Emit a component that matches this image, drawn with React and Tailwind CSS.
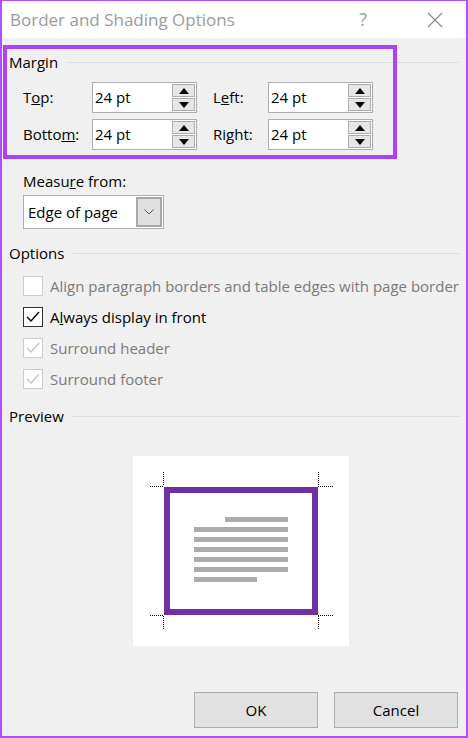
import React from "react";

const font = { fontFamily: '"Open Sans", "Noto Sans", sans-serif' };

const Spinner = () => (
  <div className="flex flex-col w-[23px] my-[1px] mr-[1px] gap-[1px]">
    <div className="flex-1 bg-[#e6e6e6] border border-[#adadad] flex items-center justify-center">
      <svg width="10" height="6" viewBox="0 0 10 6">
        <path d="M0 6 L5 0 L10 6 Z" fill="#000" />
      </svg>
    </div>
    <div className="flex-1 bg-[#e6e6e6] border border-[#adadad] flex items-center justify-center">
      <svg width="10" height="6" viewBox="0 0 10 6">
        <path d="M0 0 L10 0 L5 6 Z" fill="#000" />
      </svg>
    </div>
  </div>
);

const NumInput = () => (
  <div className="w-[105px] h-[31px] bg-white border border-[#adadad] flex items-stretch">
    <div className="flex-1 flex items-center pl-[2px] text-[15px] text-black">24 pt</div>
    <Spinner />
  </div>
);

const Heading = ({ children }) => (
  <div className="flex items-center h-[20px]">
    <span className="text-[15px] text-black leading-[20px]">{children}</span>
    <div className="flex-1 h-px bg-[#dcdcdc] ml-[9px]" />
  </div>
);

const Check = ({ checked, disabled, children }) => (
  <div className="flex items-center h-[20px] pl-[14px] gap-[7px]">
    <div
      className={
        "w-[20px] h-[20px] border bg-white flex items-center justify-center " +
        (disabled ? "border-[#cccccc]" : "border-[#333333]")
      }
    >
      {checked && (
        <svg width="14" height="12" viewBox="0 0 14 12">
          <path
            d="M1 6 L5 10 L13 1"
            fill="none"
            stroke={disabled ? "#c4c4c4" : "#000"}
            strokeWidth="1.4"
          />
        </svg>
      )}
    </div>
    <span className={"text-[15px] leading-[20px] " + (disabled ? "text-[#7a7a7a]" : "text-black")}>
      {children}
    </span>
  </div>
);

const Preview = () => (
  <svg width="216" height="190" viewBox="0 0 216 190">
    <rect x="0" y="0" width="216" height="190" fill="#fff" />
    <g stroke="#000" strokeWidth="1" strokeDasharray="1 1">
      <path d="M17 30.5 H31 M30.5 16 V30" />
      <path d="M185 30.5 H200 M185.5 16 V30" />
      <path d="M17 159.5 H31 M30.5 160 V174" />
      <path d="M185 159.5 H200 M185.5 160 V174" />
    </g>
    <rect x="34" y="34" width="148" height="122" fill="none" stroke="#7030a0" strokeWidth="6" />
    <g fill="#acacac">
      <rect x="92" y="61" width="63" height="5" />
      <rect x="61" y="71" width="94" height="5" />
      <rect x="61" y="81" width="94" height="5" />
      <rect x="61" y="91" width="94" height="5" />
      <rect x="61" y="101" width="94" height="5" />
      <rect x="61" y="111" width="94" height="5" />
      <rect x="61" y="121" width="63" height="5" />
    </g>
  </svg>
);

export default function App() {
  return (
    <div
      className="w-[468px] h-[738px] border-x-2 border-b-2 border-t border-[#b44cff] flex flex-col relative"
      style={font}
    >
      {/* title bar */}
      <div className="h-[37px] bg-white flex items-center pl-[8px] shrink-0">
        <span className="text-[17px] text-[#9a9a9a] flex-1">Border and Shading Options</span>
        <span className="text-[18px] text-[#9a9a9a] mr-[60px]">?</span>
        <svg width="16" height="16" viewBox="0 0 16 16" className="mr-[23px]">
          <path d="M1 1 L15 15 M15 1 L1 15" stroke="#888" strokeWidth="1.2" />
        </svg>
      </div>

      {/* body */}
      <div className="flex-1 bg-[#f0f0f0] flex flex-col pl-[7px] pr-[7px] pb-[8px]">
        <div className="mt-[14px]">
          <Heading>Margin</Heading>
        </div>

        <div className="mt-[10px] flex flex-col gap-[6px] pl-[14px]">
          <div className="flex items-center">
            <span className="w-[69px] text-[15px] text-black">
              T<u>o</u>p:
            </span>
            <NumInput />
            <span className="w-[71px] pl-[16px] text-[15px] text-black">
              L<u>e</u>ft:
            </span>
            <NumInput />
          </div>
          <div className="flex items-center">
            <span className="w-[69px] text-[15px] text-black">
              Botto<u>m</u>:
            </span>
            <NumInput />
            <span className="w-[71px] pl-[16px] text-[15px] text-black">
              Ri<u>g</u>ht:
            </span>
            <NumInput />
          </div>
        </div>

        <div className="mt-[21px] pl-[14px] text-[15px] leading-[20px] text-black">
          Measu<u>r</u>e from:
        </div>
        <div className="mt-[4px] ml-[14px] w-[141px] h-[34px] bg-white border border-[#adadad] flex items-stretch">
          <div className="flex-1 flex items-center pl-[4px] text-[15px] text-black">Edge of page</div>
          <div className="w-[26px] my-[1px] mr-[1px] bg-[#e0e0e0] border-2 border-[#a9a9a9] flex items-center justify-center">
            <svg width="10" height="6" viewBox="0 0 10 6">
              <path d="M0.5 0.5 L5 5 L9.5 0.5" fill="none" stroke="#555" strokeWidth="1" />
            </svg>
          </div>
        </div>

        <div className="mt-[14px]">
          <Heading>Options</Heading>
        </div>

        <div className="mt-[13px] flex flex-col gap-[11px]">
          <Check disabled>Align paragraph borders and table edges with page border</Check>
          <Check checked>
            A<u>l</u>ways display in front
          </Check>
          <Check checked disabled>Surround header</Check>
          <Check checked disabled>Surround footer</Check>
        </div>

        <div className="mt-[17px]">
          <Heading>Preview</Heading>
        </div>

        <div className="mt-[30px] ml-[124px]">
          <Preview />
        </div>

        <div className="mt-auto flex justify-end gap-[16px] mr-px">
          <button className="w-[124px] h-[36px] bg-[#e1e1e1] border border-[#adadad] text-[15px] text-black">
            OK
          </button>
          <button className="w-[124px] h-[36px] bg-[#e1e1e1] border border-[#adadad] text-[15px] text-black">
            Cancel
          </button>
        </div>
      </div>

      {/* highlight annotation over the margin group */}
      <div className="absolute left-[1px] top-[44px] w-[394px] h-[114px] border-4 border-[#a943ff] pointer-events-none" />
    </div>
  );
}
